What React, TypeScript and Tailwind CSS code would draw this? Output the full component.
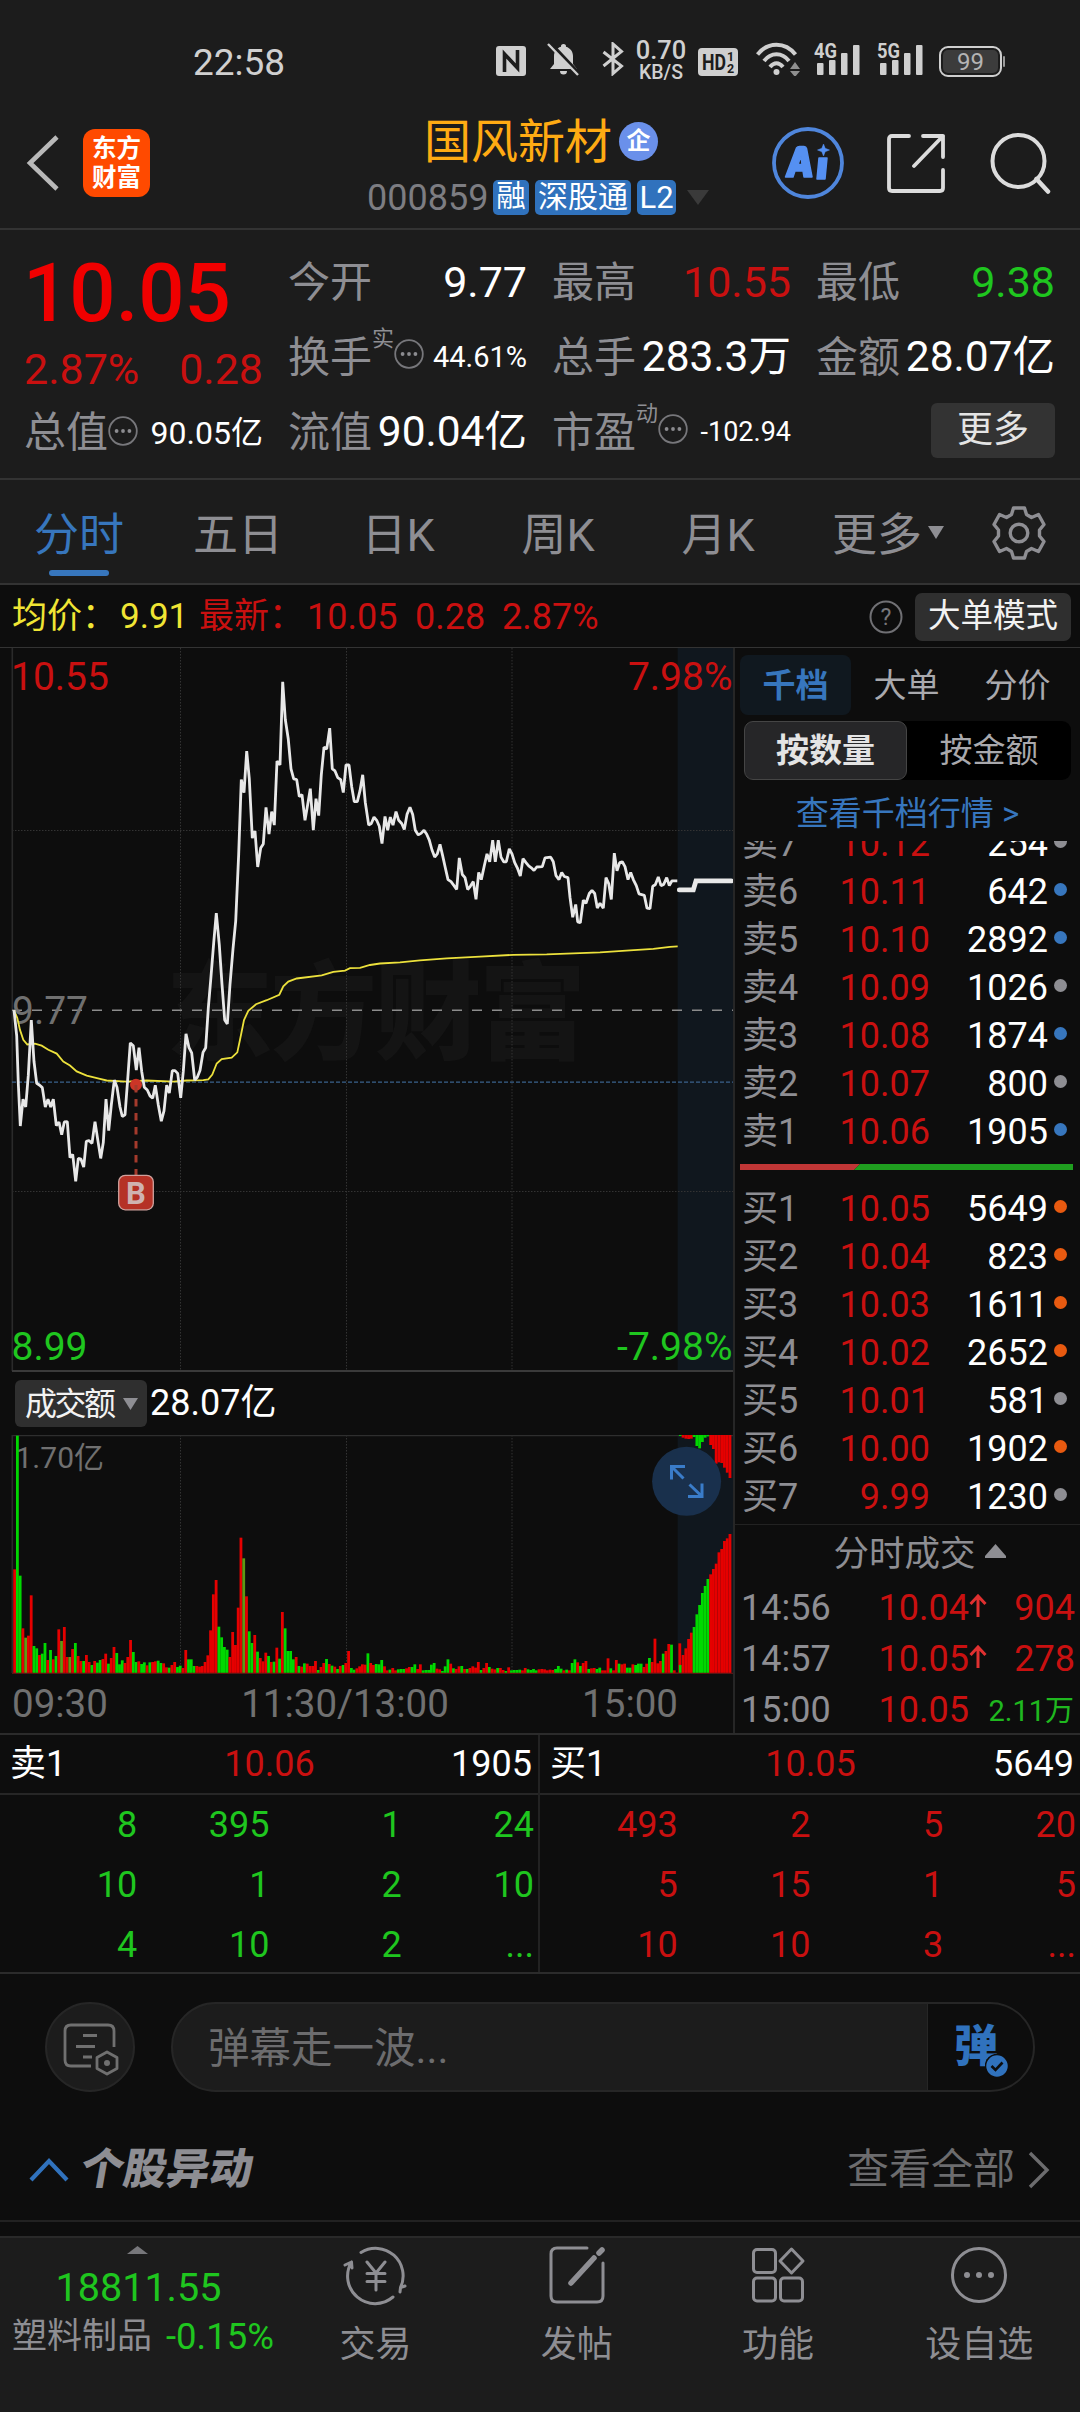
import type { ReactNode } from "react";

/* ---------- chart data ---------- */

// Price series: flat list of x,y pairs on the sampling grid of the plot.
const PRICE =
  "42,935 50,1000 55,1120 61,1228 69,1160 77,1180 85,1100 94,960 102,1065 110,1120 119,1125 127,1131 136,1180 144,1160 152,1180 160,1160 169,1227 177,1218 185,1250 193,1218 202,1217 210,1308 218,1300 227,1368 235,1310 243,1312 251,1332 259,1267 267,1265 276,1272 285,1217 293,1262 302,1310 310,1270 318,1160 326,1240 334,1175 343,1112 351,1130 360,1180 367,1204 375,1200 383,1110 391,1018 400,1025 409,1087 417,1030 425,1090 433,1130 442,1137 450,1152 458,1158 466,1125 475,1175 484,1216 492,1190 500,1125 508,1145 517,1088 525,1088 533,1095 542,1157 550,1090 558,995 567,1030 575,1043 584,1112 592,1105 600,1088 609,1042 617,1030 625,930 633,850 641,765 649,690 658,770 666,870 674,960 682,970 690,870 699,780 707,710 716,540 724,352 732,385 740,280 748,350 757,500 765,482 773,573 782,525 790,515 798,422 807,490 815,433 823,467 831,305 840,315 848,105 856,200 865,250 873,325 881,350 890,352 898,395 906,390 915,455 923,415 931,375 940,480 948,400 956,443 964,340 972,270 980,275 989,222 997,325 1005,330 1013,347 1022,352 1030,385 1038,315 1047,315 1055,370 1063,408 1072,408 1080,380 1088,340 1096,410 1106,467 1114,463 1122,447 1130,455 1138,470 1146,514 1155,445 1163,480 1171,447 1179,467 1188,433 1196,455 1205,463 1213,478 1221,440 1230,422 1238,440 1246,480 1255,492 1263,488 1272,480 1280,490 1288,505 1296,530 1304,548 1312,540 1320,516 1328,545 1336,575 1344,605 1353,610 1362,620 1370,630 1378,550 1387,592 1395,600 1403,630 1411,622 1420,610 1428,655 1436,587 1444,605 1453,570 1461,540 1469,560 1478,505 1486,560 1495,505 1503,548 1511,560 1519,560 1528,527 1536,540 1544,562 1552,575 1561,596 1569,552 1578,562 1586,570 1594,575 1602,582 1610,573 1627,572 1635,550 1652,548 1660,560 1668,595 1677,605 1685,587 1693,597 1704,600 1710,650 1718,700 1727,668 1733,712 1741,714 1750,657 1758,665 1768,640 1776,632 1784,640 1792,677 1800,665 1810,677 1818,600 1826,615 1834,655 1843,538 1851,583 1859,562 1867,560 1875,572 1884,605 1892,587 1900,605 1909,620 1917,641 1933,645 1941,677 1950,678 1958,622 1966,618 1975,598 1983,620 1991,617 2000,600 2008,620 2016,608 2032,608";

const AUCTION_PRICE = "2038,631 2080,631 2088,608 2194,608";

const AVERAGE =
  "42,935 52,955 60,985 70,1010 82,1022 105,1020 125,1025 145,1035 170,1045 190,1065 210,1075 230,1090 260,1101 300,1109 320,1113 380,1116 440,1113 520,1116 560,1113 610,1112 625,1110 637,1098 650,1070 665,1059 695,1055 712,1042 720,1010 732,960 745,937 768,920 800,910 838,896 850,875 865,863 890,855 965,847 1000,838 1035,835 1050,829 1080,828 1110,821 1140,817 1200,814 1260,809 1340,804 1440,800 1540,795 1640,794 1800,789 1890,784 1960,780 2010,775 2033,774";

// Maps the sampling grid to plot pixels (plot origin is the top left of the price panel).
function toPixels(series: string): string {
  return series
    .split(" ")
    .map((p) => {
      const [x, y] = p.split(",").map(Number);
      return `${(x / 3).toFixed(1)},${(y / 2.529 - 7.6).toFixed(1)}`;
    })
    .join(" ");
}

// One entry per minute: top of the bar and its direction (r = up, g = down).
const VOLUME =
  "685r 284g 704g 862r 890o 884r 763r 915g 922g 942r 938g 906g 957r 927g 955r 945g 865r 900o 858r 948r 948o 924r 906g 945r 960r 960g 942r 963r 972g 960r 965g 957g 954r 938r 968g 951r 918r 936g 970g 958g 966r 948r 897r 933g 963g 961r 969g 964g 973r 964g 963r 961r 959g 966g 967r 979r 980g 972r 963r 978g 974g 981r 927r 955g 955g 975g 975r 977r 975r 963r 943r 868r 760r 717r 857g 889g 918g 926g 948r 873r 912r 800r 590r 652o 766r 871g 906g 882r 932g 951r 961r 935r 945g 963r 962g 920r 953g 813r 862g 930g 930g 955g 948r 975g 977r 967g 968r 975r 975r 960r 987g 978r 966r 954g 969r 974g 977r 984g 975r 972g 966r 930r 981g 986g 982r 976r 970r 971r 937g 966r 972r 969g 970g 957g 976r 988r 986g 981r 988r 985g 984g 984g 982r 978r 978g 970g 984r 970r 988g 987g 987g 971g 966g 983r 985r 990g 976g 955g 968r 982g 984r 976r 975g 984r 984g 981r 976r 980r 963r 987g 981r 966r 978g 983r 985r 981g 981r 987r 990g 979r 988g 987g 987g 986g 988r 981r 985g 987g 984g 988g 985r 984r 985r 988r 986r 987r 984g 975g 983g 988r 986g 988r 966g 955g 964r 975g 966r 960r 984g 982r 981r 984g 980g 988r 988r 952r 982g 988r 957r 968g 970r 968r 980g 980g 970r 972g 968g 968g 978r 968r 951g 963r 893r 967r 960r 938g 930r 909r 911g 988r 995r 907r";

const AUCTION_UP =
  "972g 942r 922r 894r 875r 858g 820g 792g 756g 735g 714g 700r 684r 668r 634r 624r 600r 592r 579r";
const AUCTION_DOWN =
  "285g 290r 293r 294r 293r 288g 315g 322g 303g 290g 286g 312r 324r 368r 364r 366r 380r 395r 411r";

const BAR_COLOR: Record<string, string> = { r: "#e60000", g: "#00d800", o: "#5e9a14" };

function bars(series: string, start: number, fromTop = false) {
  return series.split(" ").map((entry, i) => {
    const level = (Number(entry.slice(0, -1)) - 282) / 3;
    const x = (start + i * 8.28 - 4.3) / 3;
    return (
      <rect
        key={i}
        x={x}
        y={fromTop ? 0 : level}
        width={2.8}
        height={fromTop ? level : 238 - level}
        fill={BAR_COLOR[entry.slice(-1)]}
      />
    );
  });
}

function PriceChart() {
  return (
    <svg width="733" height="724" viewBox="0 0 733 724" className="block">
      <g fill="#141414">
        <text x="166" y="403" fontSize="107" fontWeight="900" textLength="420">
          东方财富
        </text>
      </g>
      <rect x="677.7" y="0" width="55.5" height="723" fill="#10171e" />
      <g stroke="#333" strokeWidth="1" strokeDasharray="1.5 1.5">
        <path d="M180.5 0V723M346.5 0V723M512 0V723M12 182.5H733M12 543.5H733" />
      </g>
      <path d="M12.3 0V723" stroke="#2a2a2a" strokeWidth="1.6" />
      <path d="M12 723H733" stroke="#3a3a3a" strokeWidth="2" />
      <path d="M12 362.3H733" stroke="#8c8c8c" strokeWidth="1.6" strokeDasharray="10 10" />
      <path d="M12 434.2H733" stroke="#3a628c" strokeWidth="1.3" strokeDasharray="4 2" />
      <g fontSize="39">
        <text x="12" y="375.5" fill="#707070">9.77</text>
        <text x="11" y="42" fill="#c91010">10.55</text>
        <text x="732.5" y="42" fill="#c91010" textAnchor="end">7.98%</text>
        <text x="11.5" y="712" fill="#1fc61f">8.99</text>
        <text x="732.5" y="712" fill="#1fc61f" textAnchor="end">-7.98%</text>
      </g>
      <polyline points={toPixels(AVERAGE)} fill="none" stroke="#ece13c" strokeWidth="1.8" />
      <polyline points={toPixels(PRICE)} fill="none" stroke="#e8e8e8" strokeWidth="2.8" strokeLinejoin="bevel" />
      <polyline points={toPixels(AUCTION_PRICE)} fill="none" stroke="#e8e8e8" strokeWidth="4.8" strokeLinecap="round" />
      <circle cx="136" cy="436.8" r="6" fill="#cc3527" />
      <path d="M136 437V527" stroke="#a43a2c" strokeWidth="3" strokeDasharray="7.5 6.5" />
      <rect x="118.7" y="527.3" width="34.6" height="34.5" rx="6.5" fill="#b53226" stroke="#cfa19d" strokeWidth="1.3" />
      <text x="136" y="555.8" fontSize="31" fontWeight="700" fill="#cfb3b1" textAnchor="middle">B</text>
    </svg>
  );
}

function VolumeChart() {
  return (
    <svg width="733" height="239" viewBox="0 0 733 239" className="block">
      <rect x="677.7" y="0" width="55.5" height="238" fill="#10171e" />
      <path d="M180.5 0V238M346.5 0V238M512 0V238" stroke="#333" strokeWidth="1" strokeDasharray="1.5 1.5" />
      <path d="M12 0.6H733" stroke="#2e2e2e" strokeWidth="1.4" />
      <path d="M12.3 0V238" stroke="#2a2a2a" strokeWidth="1.6" />
      <text x="15.5" y="33.3" fontSize="30" fill="#707070">1.70亿</text>
      {bars(VOLUME, 44)}
      {bars(AUCTION_UP, 2041)}
      {bars(AUCTION_DOWN, 2041, true)}
      <path d="M12 238.3H733" stroke="#5a1414" strokeWidth="1.2" />
      <circle cx="686.6" cy="46.3" r="34.5" fill="#1a324e" fillOpacity="0.97" />
      <path
        d="M671.5 44.5V31.5H685M672 32L683.5 43.5M702 48.5V61.5H688M701.5 61L689.5 49.5"
        fill="none"
        stroke="#3a7cc9"
        strokeWidth="3"
      />
    </svg>
  );
}

/* ---------- small pieces ---------- */

function Dots() {
  return (
    <svg width="30" height="30" viewBox="0 0 30 30" fill="none" className="mb-[4px] shrink-0">
      <circle cx="15" cy="15" r="13.8" stroke="#77777b" strokeWidth="1.8" />
      <g fill="#8c8c90">
        <circle cx="8.6" cy="15" r="1.9" />
        <circle cx="15" cy="15" r="1.9" />
        <circle cx="21.4" cy="15" r="1.9" />
      </g>
    </svg>
  );
}

function Stat({ label, children }: { label: ReactNode; children?: ReactNode }) {
  return (
    <div className="flex h-[75px] w-[239px] items-center justify-between whitespace-nowrap">
      <span className="flex items-center text-[42px] leading-none text-[#8e8e93]">{label}</span>
      {children}
    </div>
  );
}

function Signal({ label }: { label: string }) {
  return (
    <svg width="47" height="34" viewBox="0 0 47 34" className="shrink-0">
      <g fill="#cfcfcf">
        <rect x="3" y="21" width="6.5" height="12" rx="1" />
        <rect x="15" y="18" width="6.5" height="15" rx="1" />
        <rect x="27" y="11" width="6.5" height="22" rx="1" />
        <rect x="39" y="3" width="6.5" height="30" rx="1" />
        <text x="0" y="16" fontSize="21" fontWeight="700" textLength="23" lengthAdjust="spacingAndGlyphs">
          {label}
        </text>
      </g>
    </svg>
  );
}

function StatusBar() {
  return (
    <div className="flex h-[76px] items-end text-[#d0d0d0]">
      <span className="mb-[-5px] ml-[193px] w-[303px] text-[37px] leading-none">22:58</span>
      <svg width="30" height="30" viewBox="0 0 30 30" className="shrink-0">
        <rect width="30" height="30" rx="3" fill="#cfcfcf" />
        <path d="M8.500 26V8L21.500 22V4" fill="none" stroke="#1c1c1c" strokeWidth="3.600" />
      </svg>
      <svg width="33" height="34" viewBox="0 0 33 34" className="ml-[21px] shrink-0">
        <path
          d="M16.500 2a2.500 2.500 0 0 1 2.500 2.700c4.500 1.300 7 5 7 9.300v8l4 5H3l4-5v-8c0-4.300 2.500-8 7-9.300A2.500 2.500 0 0 1 16.500 2zM13 29h7a3.500 3.500 0 0 1-7 0z"
          fill="#cfcfcf"
        />
        <path d="M3 1L33 33" stroke="#1c1c1c" strokeWidth="4" />
        <path d="M1 2L31 33" stroke="#cfcfcf" strokeWidth="2.400" />
      </svg>
      <svg width="22" height="34" viewBox="0 0 22 34" className="ml-[22px] shrink-0">
        <path d="M1.500 10L19.500 24L11 31.500V2L19.500 9.500L1.500 24" fill="none" stroke="#cfcfcf" strokeWidth="3" />
      </svg>
      <div className="mb-[-7px] ml-[12px] flex w-[50px] flex-col items-center font-medium">
        <span className="text-[25.5px] leading-[19px]">0.70</span>
        <span className="pt-[3px] text-[19.5px] leading-[20px]">KB/S</span>
      </div>
      <svg width="40" height="28" viewBox="0 0 40 28" className="ml-[12px] shrink-0">
        <rect width="40" height="28" rx="4" fill="#cfcfcf" />
        <g fill="#1c1c1c" fontWeight="700">
          <text x="4" y="22" fontSize="22" textLength="24" lengthAdjust="spacingAndGlyphs">HD</text>
          <text x="29" y="13" fontSize="12.500">1</text>
          <text x="29" y="25" fontSize="12.500">2</text>
        </g>
      </svg>
      <svg width="45" height="34" viewBox="0 0 45 34" className="ml-[18px] shrink-0">
        <g fill="none" stroke="#cfcfcf" strokeWidth="4">
          <path d="M1.500 12.500C12 -0.500 29 -0.500 39.500 12.500" />
          <path d="M8 19C15 10 26 10 33 19" />
          <path d="M14 25C18 20 23 20 27 25" />
        </g>
        <circle cx="20.500" cy="30" r="3" fill="#cfcfcf" />
        <path d="M39 20L44 27H34zM39 35L34 29H44z" fill="#8f8f8f" />
      </svg>
      <div className="ml-[13px] flex gap-[16px]">
        <Signal label="4G" />
        <Signal label="5G" />
      </div>
      <div className="mb-[-1px] ml-[15px] flex items-center">
        <div className="flex h-[31px] w-[63px] items-center justify-center rounded-[9px] border-2 border-[#cfcfcf] p-[2px]">
          <div className="flex h-full w-full items-center justify-center rounded-[5px] bg-[#3c3c3c] text-[24px] leading-none text-[#b4b4b4]">
            99
          </div>
        </div>
        <div className="ml-[1px] h-[11px] w-[2px] rounded bg-[#9a9a9a]" />
      </div>
    </div>
  );
}

function TitleBar() {
  return (
    <div className="flex h-[152px] items-start">
      <svg width="33" height="56" viewBox="0 0 33 56" fill="none" className="ml-[26px] mt-[59px] shrink-0">
        <path d="M31 2L4 28L31 54" stroke="#b9b9b9" strokeWidth="4.600" />
      </svg>
      <div className="ml-[24px] mt-[53px] flex h-[68px] w-[67px] flex-col items-center justify-center rounded-[12px] bg-[#ff4a00] text-[24.5px] font-bold leading-[29px] text-white">
        <span>东方</span>
        <span>财富</span>
      </div>
      <div className="ml-[217px] w-[346px]">
        <div className="ml-[57px] mt-[41px] flex h-[48px] items-center">
          <span className="text-[47px] leading-none text-[#ffab13]">国风新材</span>
          <span className="ml-[7px] flex h-[39px] w-[39px] shrink-0 items-center justify-center rounded-full bg-[#6a90ea] text-[24px] font-bold leading-none text-white">
            企
          </span>
        </div>
        <div className="mt-[14px] flex h-[36px] items-center text-white">
          <span className="w-[126px] pt-[1px] text-[36px] leading-none text-[#7d7d82]">000859</span>
          <span className="flex h-[35px] w-[36px] items-center justify-center rounded-[5px] bg-[#3072bd] text-[29.5px] leading-none">
            融
          </span>
          <span className="ml-[6px] flex h-[35px] w-[96px] items-center justify-center rounded-[5px] bg-[#3072bd] text-[30px] leading-none">
            深股通
          </span>
          <span className="ml-[6px] flex h-[35px] w-[39px] items-center justify-center rounded-[5px] bg-[#3072bd] text-[31px] leading-none">
            L2
          </span>
          <svg width="22" height="15" viewBox="0 0 22 15" className="ml-[11px] shrink-0">
            <path d="M0 0H22L11 15z" fill="#3a3a3a" />
          </svg>
        </div>
      </div>
      <div className="ml-[57px] mt-[49px] flex shrink-0 items-center">
        <svg width="76" height="76" viewBox="0 0 76 76" className="shrink-0">
          <circle cx="38" cy="38" r="34" fill="none" stroke="#4f86dc" strokeWidth="3.800" />
          <g fill="#5590f2" stroke="#5590f2" strokeWidth="1.500" strokeLinejoin="round">
            <path fillRule="evenodd" d="M15.500 52L26.500 23Q27.500 21.500 29.500 21.500H34Q36 21.500 36.500 23.500L42 52H34L33 46H25L23 52zM28 39.500H32L31 31z" />
            <path d="M49 33H57L55 54H47z" />
            <path d="M53.500 19L55.200 23.300L59.500 25L55.200 26.700L53.500 31L51.800 26.700L47.500 25L51.800 23.300z" strokeWidth="0.500" />
          </g>
        </svg>
        <svg width="58" height="60" viewBox="0 0 58 60" fill="none" className="ml-[41px] shrink-0">
          <path
            d="M22 3H5Q2 3 2 6V55Q2 58 5 58H53Q56 58 56 55V37M36 3H56V24M56 3L27 33"
            stroke="#dcdcdc"
            strokeWidth="3.800"
            strokeLinecap="round"
            strokeLinejoin="round"
          />
        </svg>
        <svg width="62" height="62" viewBox="0 0 62 62" fill="none" className="ml-[45px] shrink-0">
          <circle cx="28.500" cy="29" r="26" stroke="#dcdcdc" strokeWidth="4" />
          <path d="M46.500 47L58 59.500" stroke="#dcdcdc" strokeWidth="4.500" strokeLinecap="round" />
        </svg>
      </div>
    </div>
  );
}

function Quote() {
  return (
    <div className="flex h-[250px] gap-[25px] border-b-2 border-[#333] pl-[24px] pt-[15px]">
      <div className="w-[239px]">
        <div className="flex h-[75px] items-center text-[81.5px] font-medium leading-none text-[#f00000]">
          <span className="-ml-[1px] mt-[22px]">10.05</span>
        </div>
        <div className="flex h-[75px] items-center justify-between pt-[24px] text-[43px] leading-none text-[#c91010]">
          <span>2.87%</span>
          <span>0.28</span>
        </div>
        <Stat label={<>总值<Dots /></>}>
          <span className="text-[32px] leading-none text-white">90.05亿</span>
        </Stat>
      </div>
      <div className="w-[239px]">
        <Stat label="今开">
          <span className="text-[43px] leading-none text-white">9.77</span>
        </Stat>
        <Stat
          label={
            <>
              换手
              <span className="mb-[38px] text-[22px]">实</span>
              <span className="relative -top-[2px]"><Dots /></span>
            </>
          }
        >
          <span className="text-[29px] leading-none text-white">44.61%</span>
        </Stat>
        <Stat label="流值">
          <span className="text-[42.5px] leading-none text-white">90.04亿</span>
        </Stat>
      </div>
      <div className="w-[239px]">
        <Stat label="最高">
          <span className="text-[43px] leading-none text-[#c91010]">10.55</span>
        </Stat>
        <Stat label="总手">
          <span className="text-[42.5px] leading-none text-white">283.3万</span>
        </Stat>
        <Stat
          label={
            <>
              市盈
              <span className="mb-[38px] text-[22px]">动</span>
              <span className="relative -top-[2px]"><Dots /></span>
            </>
          }
        >
          <span className="text-[27px] leading-none text-white">-102.94</span>
        </Stat>
      </div>
      <div className="w-[239px]">
        <Stat label="最低">
          <span className="text-[43px] leading-none text-[#1fc61f]">9.38</span>
        </Stat>
        <Stat label="金额">
          <span className="text-[42.5px] leading-none text-white">28.07亿</span>
        </Stat>
        <div className="flex h-[70px] items-center justify-end">
          <button className="h-[55px] w-[124px] rounded-[6px] bg-[#333] text-[36px] leading-none text-[#e4e4e4]">
            更多
          </button>
        </div>
      </div>
    </div>
  );
}

function Tabs() {
  const rest = ["五日", "日K", "周K", "月K"];
  return (
    <div className="flex h-[105px] items-start border-b-2 border-[#333] pt-[31px] text-[45px] leading-[50px] text-[#8e8e93]">
      <div className="flex w-[158px] flex-col items-center text-[#3776bd]">
        <span>分时</span>
        <span className="mt-[9px] h-[6px] w-[60px] rounded-full bg-[#3776bd]" />
      </div>
      {rest.map((t) => (
        <span key={t} className="w-[160px] text-center">
          {t}
        </span>
      ))}
      <span className="ml-[34px] w-[96px]">更多</span>
      <svg width="16" height="14" viewBox="0 0 16 14" className="mt-[15px] shrink-0">
        <path d="M0 0H16L8 13z" fill="#8e8e93" />
      </svg>
      <svg width="54" height="54" viewBox="-27 -27 54 54" fill="none" stroke="#8e8e93" strokeWidth="3.400" strokeLinejoin="round" className="-mt-[5px] ml-[48px] shrink-0">
        <path d="M-5.500 -25H5.500L7.500 -18.500L12.500 -15.500L19.500 -18.500L25 -8.500L20.500 -3V3L25 8.500L19.500 18.500L12.500 15.500L7.500 18.500L5.500 25H-5.500L-7.500 18.500L-12.500 15.500L-19.500 18.500L-25 8.500L-20.500 3V-3L-25 -8.500L-19.500 -18.500L-12.500 -15.500L-7.500 -18.500Z" />
        <circle r="8.800" />
      </svg>
    </div>
  );
}

function InfoBar() {
  return (
    <div className="flex h-[63px] shrink-0 items-center whitespace-nowrap border-b border-[#333] pt-[1px] text-[35px] leading-none text-[#c91010]">
      <span className="ml-[12px] w-[108px] text-[#f0e534]">均价：</span>
      <span className="w-[79px] text-[#f0e534]">9.91</span>
      <span className="w-[108px]">最新：</span>
      <span className="w-[108px] text-[36px]">10.05</span>
      <span className="w-[87px] text-[36px]">0.28</span>
      <span className="text-[36px]">2.87%</span>
      <svg width="34" height="34" viewBox="0 0 34 34" className="ml-auto mr-[12px] shrink-0">
        <circle cx="17" cy="17" r="15.500" fill="none" stroke="#707074" strokeWidth="2" />
        <text x="17" y="25" fontSize="23" fill="#77777b" textAnchor="middle">?</text>
      </svg>
      <button className="mr-[9px] h-[48px] w-[156px] rounded-[7px] bg-[#2f2f2f] text-[32.5px] leading-none text-[#f2f2f2]">
        大单模式
      </button>
    </div>
  );
}

/* ---------- order book ---------- */

const BLUE = "bg-[#3776bd]";
const GRAY = "bg-[#8e8e93]";
const ORANGE = "bg-[#e85a10]";

const SELLS: [string, string, string, string][] = [
  ["卖7", "10.12", "254", GRAY],
  ["卖6", "10.11", "642", BLUE],
  ["卖5", "10.10", "2892", BLUE],
  ["卖4", "10.09", "1026", GRAY],
  ["卖3", "10.08", "1874", BLUE],
  ["卖2", "10.07", "800", GRAY],
  ["卖1", "10.06", "1905", BLUE],
];

const BUYS: [string, string, string, string][] = [
  ["买1", "10.05", "5649", ORANGE],
  ["买2", "10.04", "823", ORANGE],
  ["买3", "10.03", "1611", ORANGE],
  ["买4", "10.02", "2652", ORANGE],
  ["买5", "10.01", "581", GRAY],
  ["买6", "10.00", "1902", ORANGE],
  ["买7", "9.99", "1230", GRAY],
];

function Level({ row: [label, price, size, dot] }: { row: [string, string, string, string] }) {
  return (
    <div className="flex h-[48px] shrink-0 items-center pt-[1px] text-[36px] leading-none">
      <span className="ml-[7px] w-[60px] text-[#8e8e93]">{label}</span>
      <span className="w-[128px] text-right text-[#c91010]">{price}</span>
      <span className="w-[118px] text-right text-white">{size}</span>
      <span className={`mb-[5px] ml-[6px] h-[13px] w-[13px] rounded-full ${dot}`} />
    </div>
  );
}

const TRADES = [
  { time: "14:56", price: "10.04", up: true, size: "904" },
  { time: "14:57", price: "10.05", up: true, size: "278" },
  { time: "15:00", price: "10.05", up: false, size: "2.11万" },
];

function OrderBook() {
  return (
    <div className="flex w-[347px] flex-col border-l-2 border-[#262626]">
      <div className="ml-[5px] mt-[7px] flex h-[60px] text-[33px] leading-[61px] text-[#a9a9ad]">
        <span className="w-[111px] rounded-[8px] bg-[#10181f] text-center font-bold text-[#3776bd]">千档</span>
        <span className="w-[111px] text-center">大单</span>
        <span className="w-[111px] text-center">分价</span>
      </div>
      <div className="ml-[9px] mt-[6px] flex h-[59px] w-[327px] rounded-[9px] bg-black text-[33px] leading-[60px] text-[#a9a9ad]">
        <span className="w-[163px] rounded-[9px] border border-[#454545] bg-[#262628] text-center font-bold leading-[58px] text-[#e4e4e4]">
          按数量
        </span>
        <span className="flex-1 text-center">按金额</span>
      </div>
      <div className="mt-[9px] flex h-[48px] shrink-0 items-center justify-center text-[33px] leading-none text-[#3776bd]">
        查看千档行情&nbsp;&gt;
      </div>
      <div className="mt-[4px] flex h-[314px] shrink-0 flex-col justify-end overflow-hidden">
        {SELLS.map((r) => (
          <Level key={r[0]} row={r} />
        ))}
      </div>
      <svg width="333" height="6" viewBox="0 0 333 6" className="ml-[5px] mt-[9px] block shrink-0">
        <path d="M0 0H120L114 6H0z" fill="#c03636" />
        <path d="M120 0H333V6H114z" fill="#1f9e1f" />
      </svg>
      <div className="mt-[14px] shrink-0">
        {BUYS.map((r) => (
          <Level key={r[0]} row={r} />
        ))}
      </div>
      <div className="mt-[4px] flex h-[58px] shrink-0 items-center justify-center border-t border-[#222] pt-[3px] text-[35.5px] leading-none text-[#8e8e93]">
        <span className="ml-[24px]">分时成交</span>
        <svg width="21" height="14" viewBox="0 0 21 14" className="mb-[9px] ml-[9px]">
          <path d="M10.500 0L21 12V14H0V12z" fill="#8e8e93" />
        </svg>
      </div>
      {TRADES.map((t) => (
        <div key={t.time} className="flex h-[51px] shrink-0 items-center pt-[1px] text-[36px] leading-none text-[#c91010]">
          <span className="ml-[6px] w-[90px] text-[#8e8e93]">{t.time}</span>
          <span className="w-[138px] text-right">{t.price}</span>
          <span className="w-[18px]">
            {t.up && (
              <svg width="18" height="24" viewBox="0 0 18 24" fill="none" className="mb-[4px]">
                <path d="M9 23V2M1.500 10L9 2L16.500 10" stroke="#e03030" strokeWidth="3" />
              </svg>
            )}
          </span>
          {t.up ? (
            <span className="w-[88px] text-right">{t.size}</span>
          ) : (
            <span className="w-[87px] pt-[3px] text-right text-[29px] text-[#1fb81f]">{t.size}</span>
          )}
        </div>
      ))}
    </div>
  );
}

function Charts() {
  return (
    <div className="w-[733px]">
      <PriceChart />
      <div className="flex h-[63px] items-start pt-[8px]">
        <div className="ml-[15px] flex h-[47px] w-[132px] items-center rounded-[6px] bg-[#2f2f2f] text-[32px] leading-none text-[#f2f2f2]">
          <span className="ml-[10px] w-[98px] tracking-[-2.500px]">成交额</span>
          <svg width="15" height="12" viewBox="0 0 15 12">
            <path d="M0 0H15L7.500 12z" fill="#8e8e93" />
          </svg>
        </div>
        <span className="ml-[3px] mt-[5px] text-[36px] leading-none text-white">28.07亿</span>
      </div>
      <VolumeChart />
      <div className="flex h-[60px] items-center justify-between pl-[12px] pr-[55px] text-[38.500px] leading-none text-[#707070]">
        <span className="w-[200px]">09:30</span>
        <span className="-ml-[10px]">11:30/13:00</span>
        <span className="w-[190px] text-right">15:00</span>
      </div>
    </div>
  );
}

/* ---------- queue ---------- */

function Queue({ label, price, total, rows, tone }: { label: string; price: string; total: string; rows: string[][]; tone: string }) {
  return (
    <div className="w-[540px] text-[36px] leading-none">
      <div className="grid h-[60px] grid-cols-3 items-center border-b-2 border-[#262626] pl-[10px] pr-[6px] text-white">
        <span>{label}</span>
        <span className="-ml-[3px] text-center text-[#c91010]">{price}</span>
        <span className="text-right">{total}</span>
      </div>
      <div className={`h-[179px] pl-[5px] pr-[4px] ${tone}`}>
        {rows.map((r, i) => (
          <div key={i} className="grid h-[60px] grid-cols-4 items-center text-right">
            {r.map((v, j) => (
              <span key={j}>{v}</span>
            ))}
          </div>
        ))}
      </div>
    </div>
  );
}

function Danmu() {
  return (
    <div className="flex h-[118px] shrink-0 items-end pl-[45px]">
      <div className="flex h-[90px] w-[90px] items-center justify-center rounded-full border-2 border-[#262626] bg-[#1c1c1c]">
        <svg width="58" height="54" viewBox="0 0 58 54" fill="none" stroke="#707070" strokeWidth="2.800" className="ml-[4px] mt-[5px]">
          <path d="M28 43H8Q2 43 2 37V8Q2 2 8 2H45Q51 2 51 8V24" />
          <path d="M20 12.500H34M13 23.500H32M20 34H29" />
          <path d="M44 29L54 34.500V45.500L44 51L34 45.500V34.500Z" strokeLinejoin="round" />
          <circle cx="44" cy="40" r="3" fill="#707070" stroke="none" />
        </svg>
      </div>
      <div className="ml-[36px] flex h-[90px] w-[864px] overflow-hidden rounded-full border-2 border-[#262626] bg-[#1c1c1c]">
        <div className="flex flex-1 items-center border-r border-[#262626] pl-[35px] pt-[3px] text-[41.5px] leading-none text-[#6c6c6e]">
          弹幕走一波...
        </div>
        <div className="flex w-[105px] items-center bg-[#0d0d0d] pl-[26px] text-[#3072bd]">
          <div className="relative text-[44px] font-black leading-none">
            弹
            <svg width="24" height="24" viewBox="0 0 24 24" className="absolute -bottom-[9px] -right-[11px]">
              <circle cx="12" cy="12" r="11.500" fill="#3072bd" stroke="#0d0d0d" strokeWidth="1.500" />
              <path d="M6.500 12L10.500 16L17.500 8.500" fill="none" stroke="#0d0d0d" strokeWidth="2.600" />
            </svg>
          </div>
        </div>
      </div>
    </div>
  );
}

function Moves() {
  return (
    <div className="flex h-[130px] shrink-0 items-center border-b-2 border-[#222] pt-[27px]">
      <svg width="40" height="26" viewBox="0 0 40 26" fill="none" className="ml-[29px]">
        <path d="M2 23L20 4L38 23" stroke="#3072bd" strokeWidth="4.200" />
      </svg>
      <span className="ml-[12px] -skew-x-[10deg] text-[43px] font-black leading-none text-[#8e8e93]">个股异动</span>
      <span className="ml-auto text-[42px] leading-none text-[#6c6c6e]">查看全部</span>
      <svg width="24" height="38" viewBox="0 0 24 38" fill="none" className="ml-[12px] mr-[29px]">
        <path d="M3 2L20 19L3 36" stroke="#6c6c6e" strokeWidth="3.400" />
      </svg>
    </div>
  );
}

function NavItem({ label, children }: { label: string; children: ReactNode }) {
  return (
    <div className="flex flex-1 flex-col items-center pt-[6px]">
      <svg width="66" height="62" viewBox="-33 -31 66 62" fill="none" stroke="#8e8e93" strokeWidth="3" strokeLinecap="round" strokeLinejoin="round">
        {children}
      </svg>
      <span className="mt-[21px] text-[36px] leading-none">{label}</span>
    </div>
  );
}

function BottomNav() {
  return (
    <div className="flex h-[176px] border-t-2 border-[#292929] bg-[#1c1c1c] text-[#8e8e93]">
      <div className="flex w-[275px] shrink-0 flex-col items-center">
        <svg width="21" height="8" viewBox="0 0 21 8" className="mt-[8px]">
          <path d="M10.500 0L21 8H0z" fill="#77777b" />
        </svg>
        <span className="ml-[2px] mt-[14px] text-[39.500px] leading-none text-[#1fc61f]">18811.55</span>
        <div className="mt-[11px] flex w-full items-center whitespace-nowrap pl-[12px] leading-none">
          <span className="text-[35px]">塑料制品</span>
          <span className="ml-[14px] text-[36.5px] text-[#1fc61f]">-0.15%</span>
        </div>
      </div>
      <NavItem label="交易">
        <path d="M-15 -22.500A27.500 27.500 0 0 1 24.500 12.500L29 11M24.500 12.500L24 17M17 22A27.500 27.500 0 0 1 -24.500 -13M-24.500 -13L-31 -10M-24.500 -13L-24 -7" />
        <path d="M-9 -13L0 -2L9 -13M0 -2V15M-9 -1.500H9M-9 6.500H9" />
      </NavItem>
      <NavItem label="发帖">
        <path d="M10 -27H-20Q-26 -27 -26 -21V21Q-26 27 -20 27H20Q26 27 26 21V-12" />
        <path d="M-6 8L17 -17" strokeWidth="5.500" />
        <path d="M22 -22L25 -25" strokeWidth="5.500" />
      </NavItem>
      <NavItem label="功能">
        <rect x="-24.500" y="-25.500" width="22" height="23" rx="3.500" />
        <rect x="-24.500" y="3" width="22" height="23" rx="3.500" />
        <rect x="2.500" y="3" width="22" height="23" rx="3.500" />
        <path d="M13.500 -26L25 -14L13.500 -2L2 -14Z" />
      </NavItem>
      <NavItem label="设自选">
        <circle r="26.500" />
        <g fill="#8e8e93" stroke="none">
          <circle cx="-12" r="3" />
          <circle r="3" />
          <circle cx="12" r="3" />
        </g>
      </NavItem>
    </div>
  );
}

export default function App() {
  return (
    <div className="flex h-[2412px] w-[1080px] flex-col overflow-hidden bg-[#0d0d0d] font-['Roboto','Noto_Sans_CJK_SC',sans-serif]">
      <div className="shrink-0 bg-[#1c1c1c]">
        <StatusBar />
        <div className="border-b-2 border-[#333]">
          <TitleBar />
        </div>
        <Quote />
        <Tabs />
      </div>
      <InfoBar />
      <div className="flex h-[1085px] shrink-0">
        <Charts />
        <OrderBook />
      </div>
      <div className="flex h-[241px] shrink-0 border-y-2 border-[#2b2b2b]">
        <Queue
          label="卖1"
          price="10.06"
          total="1905"
          tone="text-[#1fc61f]"
          rows={[
            ["8", "395", "1", "24"],
            ["10", "1", "2", "10"],
            ["4", "10", "2", "..."],
          ]}
        />
        <div className="border-l-2 border-[#222]">
          <Queue
            label="买1"
            price="10.05"
            total="5649"
            tone="text-[#c91010]"
            rows={[
              ["493", "2", "5", "20"],
              ["5", "15", "1", "5"],
              ["10", "10", "3", "..."],
            ]}
          />
        </div>
      </div>
      <Danmu />
      <Moves />
      <div className="mt-auto">
        <BottomNav />
      </div>
    </div>
  );
}
